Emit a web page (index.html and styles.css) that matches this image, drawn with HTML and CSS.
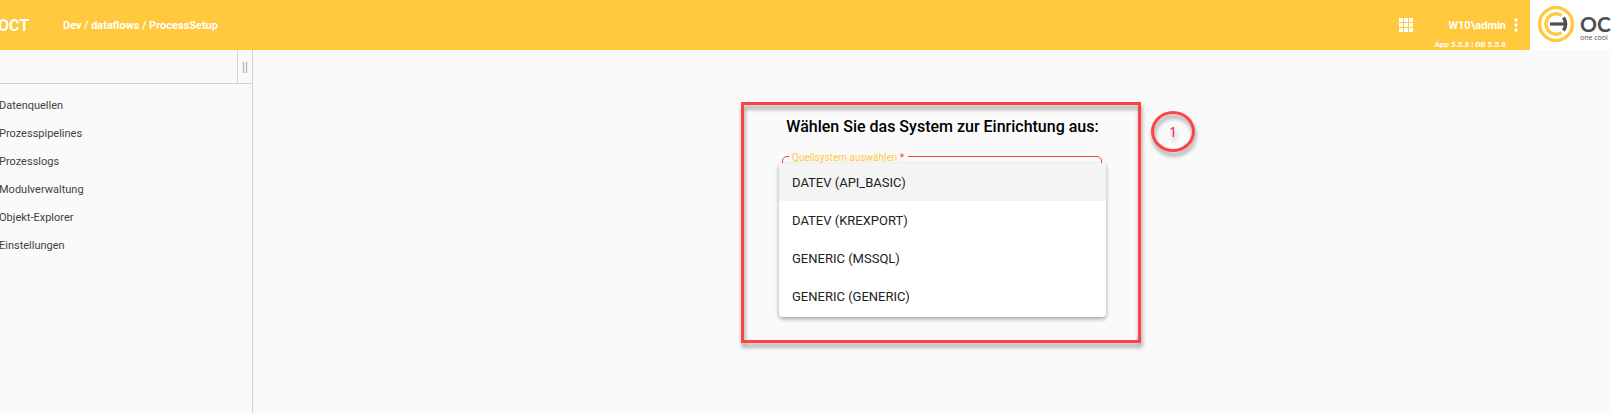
FILE: index.html
```html
<!DOCTYPE html>
<html lang="de">

<head>
    <meta charset="UTF-8">
    <meta name="viewport" content="width=device-width, initial-scale=1.0">
    <title>OCT - ProcessSetup</title>
    <link rel="stylesheet" href="styles.css">
</head>

<body>
    <header class="topbar">
        <a href="#" class="brand">OCT</a>
        <span class="breadcrumb">Dev / dataflows / ProcessSetup</span>

        <button type="button" class="icon-btn apps" aria-label="Apps">
            <svg width="14" height="14" viewBox="0 0 14 14" fill="#fff">
                <path d="M0 0h4v4H0zM5 0h4v4H5zM10 0h4v4h-4zM0 5h4v4H0zM5 5h4v4H5zM10 5h4v4h-4zM0 10h4v4H0zM5 10h4v4H5zM10 10h4v4h-4z" />
            </svg>
        </button>
        <div class="user">
            <span class="user-name">W10\admin</span>
            <span class="version">App 5.5.8 | DB 5.5.8</span>
        </div>
        <button type="button" class="icon-btn more" aria-label="Menü">
            <svg width="4" height="14" viewBox="0 0 4 14" fill="#fff">
                <circle cx="2" cy="2" r="1.7" />
                <circle cx="2" cy="7" r="1.7" />
                <circle cx="2" cy="12" r="1.7" />
            </svg>
        </button>

        <div class="logo">
            <svg class="logo-mark" width="38" height="38" viewBox="0 0 38 38" fill="none">
                <circle cx="19" cy="19" r="16.4" stroke="#ffc83d" stroke-width="3.4" />
                <path d="M24.5 10.4A10.2 10.2 0 1 0 24.5 27.6" stroke="#ffc83d" stroke-width="3.4" />
                <path d="M13 19H29" stroke="#4d4d52" stroke-width="3.2" />
                <path d="M26.5 12.5Q30.8 19 26.5 25.5" stroke="#4d4d52" stroke-width="3.4" />
            </svg>
            <div class="logo-text">
                <span class="logo-name">OC</span>
                <span class="logo-claim">one cool</span>
            </div>
        </div>
    </header>

    <div class="layout">
        <aside class="sidebar">
            <div class="sidebar-head">
                <button type="button" class="collapse">||</button>
            </div>
            <nav class="menu">
                <a href="#">Datenquellen</a>
                <a href="#">Prozesspipelines</a>
                <a href="#">Prozesslogs</a>
                <a href="#">Modulverwaltung</a>
                <a href="#">Objekt-Explorer</a>
                <a href="#">Einstellungen</a>
            </nav>
        </aside>

        <main class="content">
            <section class="setup">
                <h1>Wählen Sie das System zur Einrichtung aus:</h1>
                <div class="field">
                    <label for="source">Quellsystem auswählen <span class="required">*</span></label>
                    <select id="source" class="options" size="4" required>
                        <option class="active">DATEV (API_BASIC)</option>
                        <option>DATEV (KREXPORT)</option>
                        <option>GENERIC (MSSQL)</option>
                        <option>GENERIC (GENERIC)</option>
                    </select>
                </div>
                <span class="step">1</span>
            </section>
        </main>
    </div>
</body>

</html>
```
FILE: styles.css
```css
* {
    box-sizing: border-box;
}

body {
    display: flex;
    flex-direction: column;
    min-height: 100vh;
    margin: 0;
    overflow-x: hidden;
    background: #fafafa;
    color: #212121;
    font-family: Roboto, sans-serif;
    font-size: 11px;
}

a {
    color: inherit;
    text-decoration: none;
}

button {
    border: 0;
    padding: 0;
    background: none;
    font-family: inherit;
}

/* top bar */
.topbar {
    display: flex;
    align-items: center;
    height: 50px;
    background: #ffc83d;
    color: #fff;
    font-weight: 700;
}

.brand {
    width: 63px;
    font-size: 16px;
    text-indent: -2px;
}

.icon-btn {
    display: flex;
}

.apps {
    margin-left: auto;
    margin-right: 33px;
}

.user {
    display: flex;
    flex-direction: column;
    align-items: flex-end;
    align-self: flex-end;
    gap: 6px;
    width: 60px;
    white-space: nowrap;
}

.user-name {
    line-height: 14px;
}

.version {
    font-size: 8px;
    line-height: 11px;
}

.more {
    margin: 0 12px 0 8px;
}

.logo {
    display: flex;
    gap: 5px;
    width: 81px;
    height: 50px;
    padding: 5px 0 0 7px;
    overflow: hidden;
    background: #fff;
    color: #4d4d52;
}

.logo-mark {
    flex: none;
}

.logo-text {
    display: flex;
    flex-direction: column;
    padding-top: 9px;
    white-space: nowrap;
}

.logo-name {
    font-family: Lato, sans-serif;
    font-size: 21px;
    font-weight: 700;
    line-height: 20px;
}

.logo-claim {
    font-family: "Open Sans", sans-serif;
    font-size: 7px;
    font-weight: 400;
    line-height: 8px;
}

/* sidebar */
.layout {
    display: flex;
    flex: 1;
}

.sidebar {
    flex: none;
    width: 253px;
    border-right: 1px solid #d4d4d4;
}

.sidebar-head {
    display: flex;
    justify-content: flex-end;
    height: 34px;
    border-bottom: 1px solid #d4d4d4;
}

.collapse {
    width: 15px;
    border-left: 1px solid #d4d4d4;
    color: #9a9a9a;
    font-size: 12px;
}

.menu {
    display: flex;
    flex-direction: column;
    padding-top: 8px;
}

.menu a {
    line-height: 28px;
    text-indent: -1px;
    color: #424242;
}

/* system selection */
.content {
    display: flex;
    flex: 1;
    justify-content: center;
    align-items: flex-start;
    padding: 52px 0 52px 18px;
}

.setup {
    position: relative;
    width: 400px;
    padding: 12px 35px 26px 38px;
}

.setup::before {
    content: "";
    position: absolute;
    inset: 0;
    border: 3px solid #ff4343;
    filter: drop-shadow(1px 4px 2px rgba(0, 0, 0, 0.4));
    pointer-events: none;
}

.setup h1 {
    margin: 0 0 16px;
    color: #000;
    font-size: 16px;
    font-weight: 500;
    line-height: 26px;
    text-align: center;
    white-space: nowrap;
}

.field {
    position: relative;
    padding-top: 7px;
}

.field::before {
    content: "";
    position: absolute;
    inset: 0 4px auto 3px;
    height: 40px;
    border: 1px solid #f44336;
    border-radius: 5px;
}

.field label {
    position: absolute;
    top: -5px;
    left: 10px;
    padding: 0 4px 0 3px;
    background: #fafafa;
    color: #ffc83d;
    font-size: 10px;
    line-height: 14px;
}

.required {
    color: #f44336;
}

.options {
    position: relative;
    display: block;
    width: 100%;
    height: 154px;
    margin: 0;
    padding: 0;
    border: 0;
    border-radius: 4px;
    outline: 0;
    overflow: hidden;
    background: #fff;
    box-shadow: 0 2px 4px rgba(0, 0, 0, 0.35);
    color: #212121;
    font-family: inherit;
    font-size: 13px;
}

.options option {
    min-height: 38px;
    padding: 12px 13px 10px;
}

.options .active {
    background: #f4f4f4;
}

.step {
    position: absolute;
    top: 9px;
    right: -54px;
    display: flex;
    align-items: center;
    justify-content: center;
    width: 44px;
    height: 41px;
    border: 3px solid #ff4343;
    border-radius: 50%;
    color: #ff1f3d;
    font-family: "Noto Sans", sans-serif;
    font-size: 14px;
    filter: drop-shadow(1px 4px 2px rgba(0, 0, 0, 0.4));
}
```
